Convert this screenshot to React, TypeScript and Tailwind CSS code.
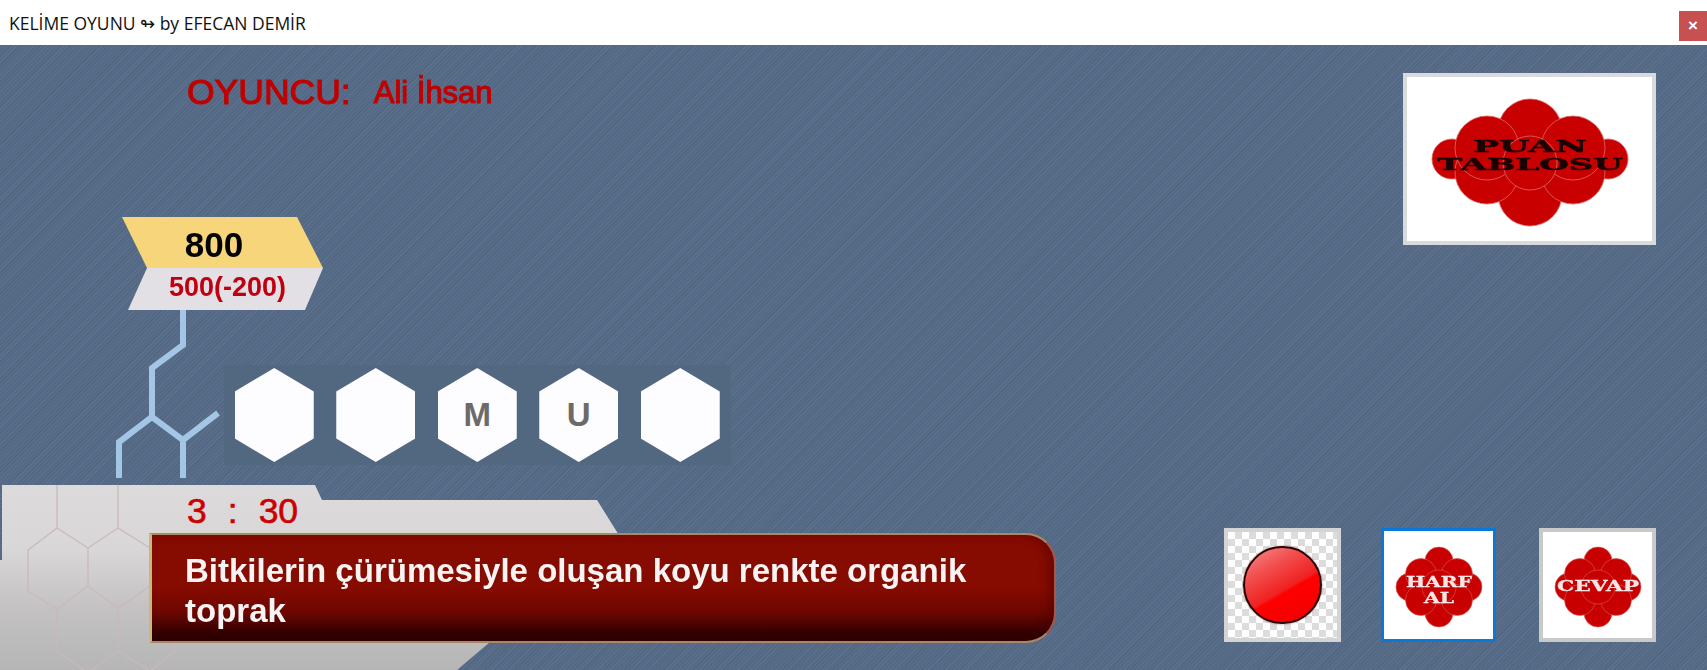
const CLOUD_WIDE: [number, number, number][] = [
  [-78, -2, 20], [78, -2, 20],
  [0, -30, 32], [0, 33, 32],
  [-43, 11, 32], [43, 11, 32], [-43, -13, 32], [43, -13, 32],
  [0, 2, 27],
];

function PuanCloud() {
  return (
    <svg width="220" height="160" viewBox="0 0 220 160" className="blur-[0.6px]">
      <g transform="translate(110 82)">
        {CLOUD_WIDE.map(([cx, cy, r], i) => (
          <circle key={i} cx={cx} cy={cy} r={r} fill="#c80000" stroke="#dc6a6a" strokeWidth="0.8" />
        ))}
      </g>
      <text x="110" y="73" textAnchor="middle" textLength="114" lengthAdjust="spacingAndGlyphs" fontFamily="'DejaVu Serif', serif" fontWeight="700" fontSize="17" fill="#1a0000" stroke="#1a0000" strokeWidth="0.5">PUAN</text>
      <text x="110" y="91" textAnchor="middle" textLength="186" lengthAdjust="spacingAndGlyphs" fontFamily="'DejaVu Serif', serif" fontWeight="700" fontSize="17" fill="#1a0000" stroke="#1a0000" strokeWidth="0.5">TABLOSU</text>
    </svg>
  );
}

const CLOUD_SMALL: [number, number, number][] = [
  [-29, 0, 14], [29, 0, 14],
  [0, -26, 14], [0, 26, 14],
  [-18, -13, 15.5], [18, -13, 15.5], [-18, 13, 15.5], [18, 13, 15.5],
  [0, 0, 17],
];

function SmallCloud({ lines }: { lines: { t: string; y: number; w: number }[] }) {
  return (
    <svg width="88" height="84" viewBox="0 0 88 84" className="blur-[0.4px] mt-[4px]">
      <g transform="translate(44 42)">
        {CLOUD_SMALL.map(([cx, cy, r], i) => (
          <circle key={i} cx={cx} cy={cy} r={r} fill="#c80000" stroke="#d85c5c" strokeWidth="0.6" />
        ))}
      </g>
      {lines.map((l) => (
        <text key={l.t} x="44" y={l.y} textAnchor="middle" textLength={l.w} lengthAdjust="spacingAndGlyphs" fontFamily="'DejaVu Serif', serif" fontWeight="700" fontSize="15" fill="#f7e6e6" stroke="#f7e6e6" strokeWidth="0.3">{l.t}</text>
      ))}
    </svg>
  );
}

function Tile({ letter }: { letter?: string }) {
  return (
    <div className="w-[101.5px] h-[100px] bg-[#526780] flex items-center justify-center">
      <div className="w-[79px] h-[94px] bg-[#fdfcfe] [clip-path:polygon(50%_0,100%_25%,100%_75%,50%_100%,0_75%,0_25%)] flex items-center justify-center font-['Liberation_Sans',sans-serif] font-bold text-[33px] text-[#6d6a6a]">
        {letter}
      </div>
    </div>
  );
}

export default function App() {
  return (
    <div className="w-[1707px] h-[670px] flex flex-col overflow-hidden bg-white">
      <div className="h-[45px] shrink-0 flex items-start justify-between bg-white">
        <div className="pl-[9px] pt-[11px] font-['Open_Sans','Noto_Sans',sans-serif] text-[17.5px] leading-[24px] text-[#111]">
          KELİME OYUNU ↬ by EFECAN DEMİR
        </div>
        <div className="mt-[11px] w-[28px] h-[30px] bg-[#c75050] flex items-center justify-center text-white text-[17px] font-bold font-['Liberation_Sans',sans-serif]">
          ×
        </div>
      </div>

      <div className="flex-1 flex justify-between bg-[#546985] bg-[repeating-linear-gradient(135deg,rgba(255,255,255,0.05)_0_1px,transparent_1px_3px),repeating-linear-gradient(135deg,rgba(0,0,0,0.025)_0_2px,transparent_2px_7px)]">
        <div className="w-[1060px] flex flex-col">
          <div className="ml-[187px] mt-[28px] h-[40px] flex items-center gap-[23px] text-[#c00000] font-['Liberation_Sans',sans-serif] blur-[0.3px]">
            <span className="text-[35.5px] [-webkit-text-stroke:1.1px_#c00000]">OYUNCU:</span>
            <span className="text-[31px] [-webkit-text-stroke:1.1px_#c00000]">Ali İhsan</span>
          </div>

          <div className="ml-[122px] mt-[104px] w-[201px] font-['Liberation_Sans',sans-serif] blur-[0.3px]">
            <div className="h-[51px] bg-[#f7d57b] [clip-path:polygon(0_0,175px_0,100%_100%,25px_100%)] flex items-center justify-center pr-[17px] pt-[5px] text-[35px] font-bold text-black">
              800
            </div>
            <div className="ml-[6px] w-[195px] h-[42px] bg-[#e2e0e4] [clip-path:polygon(19px_0,100%_0,177px_100%,0_100%)] flex items-center justify-center pl-[4px] pb-[4px] text-[27px] font-bold text-[#c00010]">
              500(-200)
            </div>
          </div>

          <div className="flex items-start ml-[115px]">
            <svg width="107" height="168" viewBox="115 310 107 168" fill="none" stroke="#a4c6e6" strokeWidth="6" className="shrink-0 blur-[0.3px]">
              <path d="M183 310V345L152 368V417L119 442V478M152 417L183 440V478M183 440L218 413" />
            </svg>
            <div className="flex mt-[55px] ml-[1.5px]">
              <Tile />
              <Tile />
              <Tile letter="M" />
              <Tile letter="U" />
              <Tile />
            </div>
          </div>

          <div className="relative flex-1 mt-[7px]">
            <div className="absolute left-0 top-0 w-[622px] h-[185px] bg-[linear-gradient(180deg,#dcdada_0%,#d8d6d6_35%,#c4c2c2_65%,#b6b6b6_100%)] [clip-path:polygon(2px_0,315px_0,322px_15px,597px_15px,622px_55px,490px_157px,457px_185px,0_185px,0_75px,2px_75px)]">
              <svg width="200" height="186" viewBox="0 484 200 186" fill="none" stroke="#c9b9ba" strokeWidth="1.3">
                <path d="M57 484V527L28 549V590L57 608L88 585V547L57 527M88 547L118 527V484M118 527L150 547M88 585L118 607L150 585M57 608V650L85 670M118 607V650L90 670M118 650L150 670L175 650V615" />
              </svg>
            </div>
            <div className="relative ml-[187px] h-[48px] flex items-center gap-[21px] pt-[6px] font-['Liberation_Sans',sans-serif] text-[35.5px] text-[#cc0000] [-webkit-text-stroke:0.6px_#cc0000]">
              <span>3</span>
              <span>:</span>
              <span>30</span>
            </div>
            <div className="relative ml-[149px] w-[907px] h-[110px] rounded-r-[30px] border-[3px] border-[#cbb67c] border-r-[#a8574c] border-r-[2px] border-t-[2px] border-t-[#a88a64] border-b-[2px] border-b-[#a8866a] bg-[linear-gradient(180deg,#860b00_0%,#860b00_50%,#6f0700_72%,#2f0000_94%,#2f0000_100%)] shadow-[inset_-6px_0_8px_rgba(60,0,0,0.35)] pl-[33px] pr-[80px] pt-[16px] font-['Liberation_Sans',sans-serif] font-bold text-[33px] leading-[40px] text-[#f8f4f4] blur-[0.25px]">
              Bitkilerin çürümesiyle oluşan koyu renkte organik toprak
            </div>
          </div>
        </div>

        <div className="flex flex-col justify-between items-end pr-[51px] pt-[28px] pb-[28px]">
          <div className="w-[253px] h-[172px] bg-white border-[4px] border-[#d9dadc] flex items-center justify-center">
            <PuanCloud />
          </div>
          <div className="flex">
            <div className="w-[117px] h-[114px] border-[4px] border-[#d4d4d4] bg-white bg-[repeating-conic-gradient(#dcdcdc_0_25%,#ffffff_0_50%)] bg-[length:14px_14px] flex items-center justify-center">
              <div className="w-[79px] h-[78px] rounded-full border-[2.5px] border-[#2a0000] bg-[linear-gradient(150deg,#f59090_0%,#f25050_28%,#f02020_55%,#ff0000_58%,#ef0000_100%)] shadow-[0_0_2px_rgba(120,40,40,0.7)]" />
            </div>
            <div className="ml-[40px] w-[115px] h-[114px] border-[3px] border-[#0a78d7] bg-white flex items-center justify-center">
              <SmallCloud lines={[{ t: "HARF", y: 42, w: 66 }, { t: "AL", y: 58, w: 30 }]} />
            </div>
            <div className="ml-[43px] w-[117px] h-[114px] border-[4px] border-[#c9c9c9] bg-white flex items-center justify-center">
              <SmallCloud lines={[{ t: "CEVAP", y: 46, w: 82 }]} />
            </div>
          </div>
        </div>
      </div>
    </div>
  );
}
